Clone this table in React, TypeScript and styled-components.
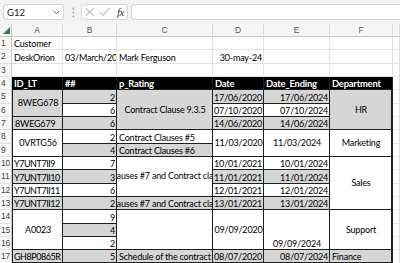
import React from 'react';
import styled, { createGlobalStyle } from 'styled-components';
import { ChevronDown } from 'lucide-react';

const GlobalStyle = createGlobalStyle`
  html, body { margin: 0; padding: 0; background: #ffffff; }
  body {
    font-family: Lato, "Liberation Sans", sans-serif;
    width: 400px;
    height: 263px;
    overflow: hidden;
  }
  #root { width: 400px; height: 263px; overflow: hidden; }
`;

const Page = styled.div`
  width: 400px;
  height: 263px;
  display: flex;
  flex-direction: column;
  overflow: hidden;
`;

const Toolbar = styled.div`
  height: 24px;
  flex: 0 0 24px;
  display: flex;
  align-items: center;
  padding-left: 3px;
  background: #f3f3f3;
  box-sizing: border-box;
`;

const NameBox = styled.div`
  width: 61px;
  height: 16px;
  box-sizing: border-box;
  border: 1px solid #d6d6d6;
  border-radius: 3px;
  background: #fff;
  display: flex;
  align-items: center;
  justify-content: space-between;
  padding: 0 2px 0 3px;
  font-size: 9.5px;
  color: #222;
`;

const Dots = styled.div`
  width: 8px;
  margin: 0 4px 0 5px;
  display: flex;
  justify-content: center;
`;

const FxBox = styled.div`
  width: 47px;
  height: 16px;
  box-sizing: border-box;
  border: 1px solid #d6d6d6;
  border-radius: 3px;
  background: #fff;
  display: flex;
  align-items: center;
  padding: 0 3px 0 3px;
  gap: 4px;
`;

const FxLabel = styled.span`
  font-family: "Liberation Serif", serif;
  font-style: italic;
  font-size: 11px;
  color: #333;
  margin-left: 3px;
  letter-spacing: -0.5px;
`;

const FormulaInput = styled.div`
  flex: 1;
  margin-left: 3px;
  height: 16px;
  box-sizing: border-box;
  border: 1px solid #d6d6d6;
  border-right: none;
  border-radius: 3px 0 0 3px;
  background: #fff;
`;

const Sheet = styled.div`
  display: grid;
  grid-template-columns: 12px 51px 54px 96px 51px 66px 63px 7px;
  grid-template-rows: 13px repeat(17, 13.333px);
  font-size: 9px;
  letter-spacing: -0.2px;
  color: #000;
`;

type Kind = 'grid' | 'table' | 'head';

const SheetCell = styled.div<{
  $r: number;
  $c: number;
  $rs: number;
  $align: 'l' | 'c' | 'r';
  $valign: 't' | 'c' | 'b';
  $fill: boolean;
  $kind: Kind;
  $leftEdge: boolean;
  $lastRow: boolean;
  $lastCol: boolean;
  $tight: boolean;
}>`
  grid-row: ${p => p.$r} / span ${p => p.$rs};
  grid-column: ${p => p.$c};
  box-sizing: border-box;
  display: flex;
  overflow: hidden;
  white-space: nowrap;
  line-height: 1;
  padding: 0 1px 1px ${p => (p.$tight ? 1 : 2)}px;
  letter-spacing: ${p => (p.$tight ? '-0.45px' : 'inherit')};
  justify-content: ${p => (p.$align === 'l' ? 'flex-start' : p.$align === 'c' ? 'center' : 'flex-end')};
  align-items: ${p => (p.$valign === 't' ? 'flex-start' : p.$valign === 'c' ? 'center' : 'flex-end')};
  background: ${p => (p.$kind === 'head' ? '#000' : p.$fill ? '#d6d6d6' : '#fff')};
  color: ${p => (p.$kind === 'head' ? '#fff' : '#000')};
  font-weight: ${p => (p.$kind === 'head' ? 700 : 400)};
  font-size: ${p => (p.$kind === 'head' ? '9.4px' : 'inherit')};
  border-right: 1px solid ${p => (p.$kind === 'grid' ? '#e1e1e1' : '#1e1e1e')};
  border-bottom: ${p => (p.$lastRow ? 2 : 1)}px solid ${p => (p.$kind === 'grid' ? '#e1e1e1' : '#1e1e1e')};
  border-left: ${p => (p.$leftEdge ? '1px solid #1e1e1e' : 'none')};
  ${p => (p.$lastCol ? 'border-right-width: 2px;' : '')}
`;

const ColHeader = styled.div<{ $c: number }>`
  grid-row: 1;
  grid-column: ${p => p.$c};
  box-sizing: border-box;
  background: #f5f5f5;
  border-right: 1px solid #dadada;
  border-bottom: 1px solid #c8c8c8;
  display: flex;
  align-items: center;
  justify-content: center;
  font-family: "Liberation Sans", sans-serif;
  font-size: 8.5px;
  letter-spacing: 0;
  color: #555;
`;

const Corner = styled.div`
  grid-row: 1;
  grid-column: 1;
  box-sizing: border-box;
  background: #f5f5f5;
  border-right: 1px solid #c8c8c8;
  border-bottom: 1px solid #c8c8c8;
  display: flex;
  align-items: flex-end;
  justify-content: flex-end;
  padding: 0 1px 2px 0;
`;

const RowHeader = styled.div<{ $r: number }>`
  grid-row: ${p => p.$r};
  grid-column: 1;
  box-sizing: border-box;
  background: #f7f7f7;
  border-right: 1px solid #c8c8c8;
  border-bottom: 1px solid #e1e1e1;
  display: flex;
  align-items: center;
  padding-left: 1px;
  font-family: "Liberation Sans", sans-serif;
  font-size: 8.5px;
  letter-spacing: -0.2px;
  color: #444;
  overflow: hidden;
  white-space: nowrap;
`;

type CellDef = {
  r: number;
  c: number;
  rs?: number;
  t?: string;
  a?: 'l' | 'c' | 'r';
  v?: 't' | 'c' | 'b';
  g?: boolean;
  k?: boolean;
};

const LONG = 'Contract Clauses #7 and Contract clauses #8, #9';

const CELLS: CellDef[] = [
  { r: 1, c: 1, t: 'Customer' },
  { r: 2, c: 1, t: 'DeskOrion' },
  { r: 2, c: 2, t: '03/March/2024' },
  { r: 2, c: 3, t: 'Mark Ferguson' },
  { r: 2, c: 4, t: '30-may-24', a: 'r' },

  { r: 4, c: 1, t: 'ID_LT' },
  { r: 4, c: 2, t: '##' },
  { r: 4, c: 3, t: 'p_Rating' },
  { r: 4, c: 4, t: 'Date' },
  { r: 4, c: 5, t: 'Date_Ending' },
  { r: 4, c: 6, t: 'Department' },

  { r: 5, c: 1, rs: 2, t: '8WEG678', a: 'c', v: 'c', g: true },
  { r: 5, c: 2, t: '2', a: 'r', g: true },
  { r: 5, c: 3, rs: 3, t: 'Contract Clause 9.3.5', a: 'c', v: 'c', g: true },
  { r: 5, c: 4, t: '17/06/2020', a: 'r', g: true },
  { r: 5, c: 5, t: '17/06/2024', a: 'r', g: true },
  { r: 5, c: 6, rs: 3, t: 'HR', a: 'c', v: 'c', g: true },
  { r: 6, c: 2, t: '6', a: 'r' },
  { r: 6, c: 4, t: '07/10/2020', a: 'r' },
  { r: 6, c: 5, t: '07/10/2024', a: 'r' },
  { r: 7, c: 1, t: '8WEG679', g: true },
  { r: 7, c: 2, t: '6', a: 'r', g: true },
  { r: 7, c: 4, t: '14/06/2020', a: 'r', g: true },
  { r: 7, c: 5, t: '14/06/2024', a: 'r', g: true },

  { r: 8, c: 1, rs: 2, t: '0VRTG56', a: 'c', v: 'c' },
  { r: 8, c: 2, t: '2', a: 'r' },
  { r: 8, c: 3, t: 'Contract Clauses #5' },
  { r: 8, c: 4, rs: 2, t: '11/03/2020', a: 'c', v: 'c' },
  { r: 8, c: 5, rs: 2, t: '11/03/2024', a: 'c', v: 'c' },
  { r: 8, c: 6, rs: 2, t: 'Marketing', a: 'c', v: 'c' },
  { r: 9, c: 2, t: '4', a: 'r', g: true },
  { r: 9, c: 3, t: 'Contract Clauses #6', g: true },

  { r: 10, c: 1, t: 'Y7UNT7II9', k: true },
  { r: 10, c: 2, t: '7', a: 'r' },
  { r: 10, c: 3, rs: 3, t: LONG, a: 'c', v: 'c' },
  { r: 10, c: 4, t: '10/01/2021', a: 'r' },
  { r: 10, c: 5, t: '10/01/2024', a: 'r' },
  { r: 10, c: 6, rs: 4, t: 'Sales', a: 'c', v: 'c' },
  { r: 11, c: 1, t: 'Y7UNT7II10', g: true, k: true },
  { r: 11, c: 2, t: '3', a: 'r', g: true },
  { r: 11, c: 4, t: '11/01/2021', a: 'r', g: true },
  { r: 11, c: 5, t: '11/01/2024', a: 'r', g: true },
  { r: 12, c: 1, t: 'Y7UNT7II11', k: true },
  { r: 12, c: 2, t: '6', a: 'r' },
  { r: 12, c: 4, t: '12/01/2021', a: 'r' },
  { r: 12, c: 5, t: '12/01/2024', a: 'r' },
  { r: 13, c: 1, t: 'Y7UNT7II12', g: true, k: true },
  { r: 13, c: 2, t: '2', a: 'r', g: true },
  { r: 13, c: 3, t: LONG, a: 'c', g: true },
  { r: 13, c: 4, t: '13/01/2021', a: 'r', g: true },
  { r: 13, c: 5, t: '13/01/2024', a: 'r', g: true },

  { r: 14, c: 1, rs: 3, t: 'A0023', a: 'c', v: 'c' },
  { r: 14, c: 2, t: '9', a: 'r' },
  { r: 14, c: 3, rs: 3 },
  { r: 14, c: 4, rs: 3, t: '09/09/2020', a: 'c', v: 'c' },
  { r: 14, c: 5, rs: 3, t: '09/09/2024', a: 'c' },
  { r: 14, c: 6, rs: 3, t: 'Support', a: 'c', v: 'c' },
  { r: 15, c: 2, t: '4', a: 'r', g: true },
  { r: 16, c: 2, t: '2', a: 'r' },

  { r: 17, c: 1, t: 'GH8P0865R', g: true, k: true },
  { r: 17, c: 2, t: '5', a: 'r', g: true },
  { r: 17, c: 3, t: 'Schedule of the contract clauses', g: true },
  { r: 17, c: 4, t: '08/07/2020', a: 'r', g: true },
  { r: 17, c: 5, t: '08/07/2024', a: 'r', g: true },
  { r: 17, c: 6, t: 'Finance', g: true },
];

function buildCells(): CellDef[] {
  const taken = new Set<string>();
  CELLS.forEach(cell => {
    for (let i = 0; i < (cell.rs ?? 1); i++) taken.add(`${cell.r + i}-${cell.c}`);
  });
  const all = [...CELLS];
  for (let r = 1; r <= 17; r++) {
    for (let c = 1; c <= 7; c++) {
      if (!taken.has(`${r}-${c}`)) all.push({ r, c });
    }
  }
  return all;
}

const ALL_CELLS = buildCells();
const LETTERS = ['A', 'B', 'C', 'D', 'E', 'F', ''];

const XIcon = () => (
  <svg width="10" height="10" viewBox="0 0 10 10">
    <path d="M1 1 L9 9 M9 1 L1 9" stroke="#b8b8b8" strokeWidth="1.1" fill="none" />
  </svg>
);

const CheckIcon = () => (
  <svg width="12" height="10" viewBox="0 0 12 10">
    <path d="M1 5 L4.5 8.5 L11 1" stroke="#b8b8b8" strokeWidth="1.1" fill="none" />
  </svg>
);

const DotsIcon = () => (
  <svg width="3" height="11" viewBox="0 0 3 11">
    <circle cx="1.5" cy="1.5" r="0.9" fill="#9a9a9a" />
    <circle cx="1.5" cy="5.5" r="0.9" fill="#9a9a9a" />
    <circle cx="1.5" cy="9.5" r="0.9" fill="#9a9a9a" />
  </svg>
);

const CornerTriangle = () => (
  <svg width="7" height="7" viewBox="0 0 7 7">
    <path d="M7 0 L7 7 L0 7 Z" fill="#3b7a4c" />
  </svg>
);

export default function App() {
  return (
    <Page>
      <GlobalStyle />
      <Toolbar>
        <NameBox>
          <span>G12</span>
          <ChevronDown size={9} strokeWidth={2.2} color="#333" />
        </NameBox>
        <Dots>
          <DotsIcon />
        </Dots>
        <FxBox>
          <XIcon />
          <CheckIcon />
          <FxLabel>fx</FxLabel>
        </FxBox>
        <FormulaInput />
      </Toolbar>
      <Sheet>
        <Corner>
          <CornerTriangle />
        </Corner>
        {LETTERS.map((l, i) => (
          <ColHeader key={`h${i}`} $c={i + 2}>
            {l}
          </ColHeader>
        ))}
        {Array.from({ length: 17 }, (_, i) => (
          <RowHeader key={`r${i}`} $r={i + 2}>
            {i + 1}
          </RowHeader>
        ))}
        {ALL_CELLS.map(cell => {
          const inTable = cell.r >= 4 && cell.c <= 6;
          const kind: Kind = inTable ? (cell.r === 4 ? 'head' : 'table') : 'grid';
          const rs = cell.rs ?? 1;
          return (
            <SheetCell
              key={`${cell.r}-${cell.c}`}
              $r={cell.r + 1}
              $c={cell.c + 1}
              $rs={rs}
              $align={cell.a ?? 'l'}
              $valign={cell.v ?? 'b'}
              $fill={!!cell.g}
              $kind={kind}
              $leftEdge={inTable && cell.c === 1 && cell.r > 4}
              $lastRow={inTable && cell.r + rs - 1 === 17}
              $lastCol={inTable && cell.c === 6 && cell.r > 4}
              $tight={!!cell.k}
            >
              {cell.t}
            </SheetCell>
          );
        })}
      </Sheet>
    </Page>
  );
}
